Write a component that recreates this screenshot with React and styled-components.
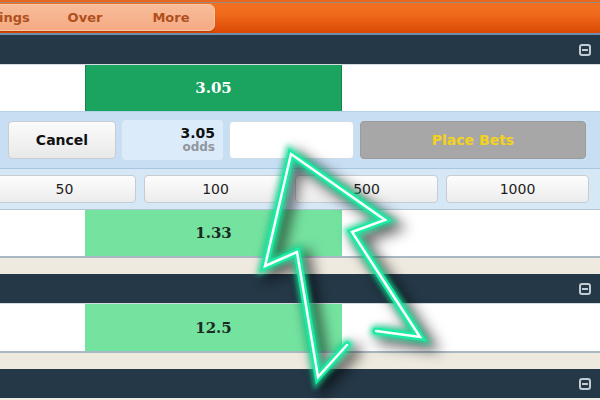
import styled, { createGlobalStyle } from "styled-components";

const GlobalStyle = createGlobalStyle`
  body {
    margin: 0;
    font-family: "DejaVu Sans", "Liberation Sans", sans-serif;
    overflow: hidden;
  }
`;

const Page = styled.div`
  position: relative;
  width: 600px;
  height: 400px;
  overflow: hidden;
  background: #f0ece2;
`;

const TopBar = styled.div`
  height: 35px;
  box-sizing: border-box;
  background: linear-gradient(#f26f22, #f06a1c 40%, #d94804);
  border-top: 2px solid #e9661f;
  box-shadow: inset 0 1px 0 #9a8a80;
  border-bottom: 2px solid #6f8eab;
  display: flex;
  align-items: center;
`;

const TabPill = styled.div`
  display: flex;
  margin-left: -60px;
  padding-left: 15px;
  height: 25px;
  background: linear-gradient(#f8bc99, #f4ab83);
  border: 1px solid #f9c7a8;
  border-radius: 0 6px 6px 0;
  box-shadow: 0 1px 1px rgba(120, 40, 0, 0.35);
`;

const Tab = styled.div`
  width: 86px;
  display: flex;
  align-items: center;
  justify-content: center;
  font-size: 13px;
  font-weight: bold;
  color: #b0501c;
`;

const SectionHeader = styled.div`
  height: 29px;
  background: #243847;
  display: flex;
  align-items: center;
  justify-content: flex-end;
  padding-right: 9px;
`;

const MinusIcon = styled.span`
  width: 12px;
  height: 12px;
  border: 2px solid #c4ccd3;
  border-radius: 3px;
  box-sizing: border-box;
  position: relative;
  &::after {
    content: "";
    position: absolute;
    left: 1px;
    right: 1px;
    top: 3px;
    height: 2px;
    background: #c4ccd3;
  }
`;

const OddsRow = styled.div`
  display: grid;
  grid-template-columns: 85px 257px 1fr;
  height: ${(p) => p.$height}px;
  background: #fff;
  border-top: ${(p) => (p.$top ? "1px solid #d3dbe1" : "none")};
  border-bottom: ${(p) => (p.$bottom ? "2px solid #aab8c3" : "none")};
`;

const OddsCell = styled.div`
  display: flex;
  align-items: center;
  justify-content: center;
  font-family: "DejaVu Serif", "Liberation Serif", serif;
  font-weight: bold;
  font-size: 15px;
  background: ${(p) => (p.$selected ? "#1aa45f" : "#74e3a0")};
  color: ${(p) => (p.$selected ? "#fff" : "#1b2a22")};
  border-left: 1px solid ${(p) => (p.$selected ? "#15854c" : "#74e3a0")};
  border-right: 1px solid ${(p) => (p.$selected ? "#15854c" : "#74e3a0")};
`;

const Spacer = styled.div`
  height: 16px;
  background: #eeeae0;
`;

const BetSlip = styled.div`
  height: 58px;
  box-sizing: border-box;
  background: #c8dff3;
  border-top: 1px solid #b6d0e8;
  border-bottom: 1px solid #a9c6e0;
  display: flex;
  align-items: center;
  gap: 6px;
  padding: 0 14px 0 8px;
`;

const Button = styled.button`
  height: 38px;
  border-radius: 4px;
  font-family: "DejaVu Sans", sans-serif;
  font-weight: bold;
  font-size: 14px;
  padding: 0;
`;

const CancelButton = styled(Button)`
  width: 108px;
  color: #111;
  background: linear-gradient(#fbfbfb, #e9e9e9);
  border: 1px solid #c9ccd0;
`;

const PlaceButton = styled(Button)`
  flex: 1;
  color: #f4d21c;
  background: #a7a7a7;
  border: 1px solid #9c9c9c;
`;

const OddsBox = styled.div`
  width: 101px;
  height: 40px;
  box-sizing: border-box;
  border-radius: 4px;
  background: #dcebf9;
  display: flex;
  flex-direction: column;
  align-items: flex-end;
  justify-content: center;
  padding-right: 8px;
  line-height: 1.15;
`;

const OddsValue = styled.span`
  font-weight: bold;
  font-size: 14px;
  color: #111;
`;

const OddsLabel = styled.span`
  font-weight: bold;
  font-size: 12px;
  color: #8f979e;
`;

const StakeInput = styled.div`
  width: 125px;
  height: 38px;
  background: #fff;
  border-radius: 4px;
  border: 1px solid #d0dce8;
  box-sizing: border-box;
`;

const StakeRow = styled.div`
  height: 41px;
  box-sizing: border-box;
  background: #d6e7f6;
  border-bottom: 1px solid #b2c5d5;
  display: grid;
  grid-template-columns: repeat(4, 143px);
  gap: 8px;
  align-items: center;
  margin-left: -7px;
  padding-right: 7px;
`;

const StakeButton = styled.button`
  height: 28px;
  border-radius: 4px;
  border: 1px solid #c6ccd2;
  background: linear-gradient(#fdfdfd, #ececec);
  font-family: "DejaVu Sans", sans-serif;
  font-size: 14px;
  color: #1d1d1d;
  padding: 0;
`;

const Overlay = styled.svg`
  position: absolute;
  left: 0;
  top: 0;
  pointer-events: none;
`;

const arrow =
  "347,345 318,377 297,252 265,266 291,154 385,220 352,232 420,337 376,331";

export default function App() {
  return (
    <Page>
      <GlobalStyle />
      <TopBar>
        <TabPill>
          <Tab>Settings</Tab>
          <Tab>Over</Tab>
          <Tab>More</Tab>
        </TabPill>
      </TopBar>
      <SectionHeader>
        <MinusIcon />
      </SectionHeader>
      <OddsRow $height={46} $top>
        <div />
        <OddsCell $selected>3.05</OddsCell>
        <div />
      </OddsRow>
      <BetSlip>
        <CancelButton>Cancel</CancelButton>
        <OddsBox>
          <OddsValue>3.05</OddsValue>
          <OddsLabel>odds</OddsLabel>
        </OddsBox>
        <StakeInput />
        <PlaceButton>Place Bets</PlaceButton>
      </BetSlip>
      <StakeRow>
        {[50, 100, 500, 1000].map((s) => (
          <StakeButton key={s}>{s}</StakeButton>
        ))}
      </StakeRow>
      <OddsRow $height={46} $bottom>
        <div />
        <OddsCell>1.33</OddsCell>
        <div />
      </OddsRow>
      <Spacer />
      <SectionHeader>
        <MinusIcon />
      </SectionHeader>
      <OddsRow $height={47} $top $bottom>
        <div />
        <OddsCell>12.5</OddsCell>
        <div />
      </OddsRow>
      <Spacer />
      <SectionHeader>
        <MinusIcon />
      </SectionHeader>

      <Overlay width="600" height="400">
        <defs>
          <filter id="shadow" x="-20%" y="-20%" width="140%" height="140%">
            <feGaussianBlur stdDeviation="7" />
          </filter>
          <filter id="glow" x="-20%" y="-20%" width="140%" height="140%">
            <feGaussianBlur stdDeviation="2.5" />
          </filter>
        </defs>
        <g fill="none" strokeLinejoin="miter" strokeLinecap="round">
          <polyline points={arrow} stroke="rgba(0,0,0,0.6)" strokeWidth="14" filter="url(#shadow)" transform="translate(7,6)" />
          <polyline points={arrow} stroke="#12e39a" strokeWidth="12" opacity="0.75" filter="url(#glow)" />
          <polyline points={arrow} stroke="#1beca4" strokeWidth="7" />
          <polyline points={arrow} stroke="#ffffff" strokeWidth="2.5" />
        </g>
      </Overlay>
    </Page>
  );
}
